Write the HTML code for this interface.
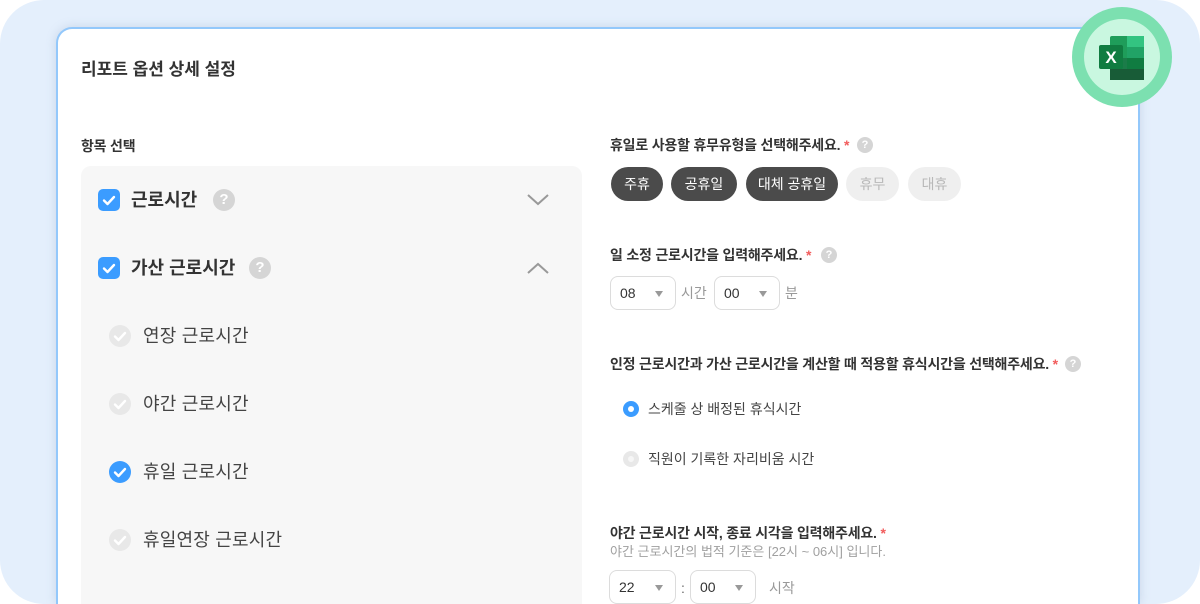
<!DOCTYPE html>
<html style="width:1200px;height:604px;overflow:hidden"><head><meta charset="utf-8"><style>
*{margin:0;padding:0;box-sizing:border-box}
body{width:1200px;height:604px;background:#fff;font-family:"Liberation Sans","Noto Sans CJK KR",sans-serif;overflow:hidden;position:relative;color:#333}
.bg{position:absolute;left:0;top:0;width:1200px;height:604px;background:#e4effc;border-radius:44px}
.card{position:absolute;left:56px;top:27px;width:1084px;height:577px;background:#fff;border:2px solid #93c8fb;border-bottom:none;border-radius:16px 16px 0 0;box-shadow:0 0 10px rgba(120,140,170,.25)}
.a{position:absolute;white-space:nowrap}
.lbl{font-size:14px;font-weight:bold;color:#333;line-height:20px;letter-spacing:-0.2px}
.req{color:#f25c5c}
.q{position:absolute;border-radius:50%;background:#d5d5d5;color:#fff;font-weight:bold;text-align:center}
.chip{position:absolute;top:167px;height:34px;border-radius:17px;font-size:14px;line-height:34px;text-align:center;background:#4b4b4b;color:#fff}
.chip.off{background:#efefef;color:#b8b8b8}
.sel{position:absolute;height:34px;border:1px solid #dcdcdc;border-radius:8px;background:#fff;font-size:14px;line-height:32px;padding-left:9px;color:#333}
.sel.b{height:34px;border-bottom-left-radius:8px}
.sel:after{content:"";position:absolute;right:12px;top:14px;border-left:4px solid transparent;border-right:4px solid transparent;border-top:6px solid #999}
.unit{position:absolute;font-size:14px;color:#999;line-height:20px}
.cb{position:absolute;width:22px;height:22px;border-radius:5px;background:#3b9cff}
.cc{position:absolute;width:22px;height:22px;border-radius:50%}
.sub{position:absolute;left:143px;font-size:18px;color:#444;line-height:24px;letter-spacing:0.2px}
</style></head><body>
<div class="bg"></div>
<div class="card"></div>

<div class="a" style="left:81px;top:59px;font-size:17px;font-weight:bold;color:#333;line-height:22px">리포트 옵션 상세 설정</div>
<div class="a lbl" style="left:81px;top:136px">항목 선택</div>

<div style="position:absolute;left:81px;top:166px;width:501px;height:438px;background:#f7f7f7;border-radius:10px 10px 0 0"></div>

<div class="cb" style="left:98px;top:189px"><svg width="22" height="22"><path d="M6 11.5l3.5 3.5 6.5-7" stroke="#fff" stroke-width="2.4" fill="none" stroke-linecap="round" stroke-linejoin="round"/></svg></div>
<div class="a" style="left:131px;top:188px;font-size:18px;font-weight:bold;color:#333;line-height:24px">근로시간</div>
<div class="q" style="left:213px;top:189px;width:22px;height:22px;font-size:15px;line-height:22px">?</div>
<svg class="a" style="left:526px;top:192px" width="24" height="16"><path d="M2 3l10 9 10-9" stroke="#999" stroke-width="2" fill="none"/></svg>

<div class="cb" style="left:98px;top:257px"><svg width="22" height="22"><path d="M6 11.5l3.5 3.5 6.5-7" stroke="#fff" stroke-width="2.4" fill="none" stroke-linecap="round" stroke-linejoin="round"/></svg></div>
<div class="a" style="left:131px;top:256px;font-size:18px;font-weight:bold;color:#333;line-height:24px">가산 근로시간</div>
<div class="q" style="left:249px;top:257px;width:22px;height:22px;font-size:15px;line-height:22px">?</div>
<svg class="a" style="left:526px;top:260px" width="24" height="16"><path d="M2 13l10-9 10 9" stroke="#999" stroke-width="2" fill="none"/></svg>

<div class="cc" style="left:109px;top:325px;background:#e8e8e8"><svg width="22" height="22"><path d="M6 11.5l3.5 3.5 6.5-7" stroke="#fff" stroke-width="2.4" fill="none" stroke-linecap="round" stroke-linejoin="round"/></svg></div>
<div class="sub" style="top:324px">연장 근로시간</div>
<div class="cc" style="left:109px;top:393px;background:#e8e8e8"><svg width="22" height="22"><path d="M6 11.5l3.5 3.5 6.5-7" stroke="#fff" stroke-width="2.4" fill="none" stroke-linecap="round" stroke-linejoin="round"/></svg></div>
<div class="sub" style="top:392px">야간 근로시간</div>
<div class="cc" style="left:109px;top:461px;background:#3b9cff"><svg width="22" height="22"><path d="M6 11.5l3.5 3.5 6.5-7" stroke="#fff" stroke-width="2.4" fill="none" stroke-linecap="round" stroke-linejoin="round"/></svg></div>
<div class="sub" style="top:460px">휴일 근로시간</div>
<div class="cc" style="left:109px;top:529px;background:#e8e8e8"><svg width="22" height="22"><path d="M6 11.5l3.5 3.5 6.5-7" stroke="#fff" stroke-width="2.4" fill="none" stroke-linecap="round" stroke-linejoin="round"/></svg></div>
<div class="sub" style="top:528px">휴일연장 근로시간</div>

<div class="a lbl" style="left:610px;top:135px">휴일로 사용할 휴무유형을 선택해주세요. <span class="req">*</span></div>
<div class="q" style="left:857px;top:137px;width:16px;height:16px;font-size:11px;line-height:16px">?</div>
<div class="chip" style="left:611px;width:52px">주휴</div>
<div class="chip" style="left:671px;width:66px">공휴일</div>
<div class="chip" style="left:746px;width:92px">대체 공휴일</div>
<div class="chip off" style="left:846px;width:53px">휴무</div>
<div class="chip off" style="left:908px;width:53px">대휴</div>

<div class="a lbl" style="left:610px;top:245px">일 소정 근로시간을 입력해주세요. <span class="req">*</span></div>
<div class="q" style="left:821px;top:247px;width:16px;height:16px;font-size:11px;line-height:16px">?</div>
<div class="sel" style="left:610px;top:276px;width:66px">08</div>
<div class="unit" style="left:681px;top:283px">시간</div>
<div class="sel" style="left:714px;top:276px;width:66px">00</div>
<div class="unit" style="left:785px;top:283px">분</div>

<div class="a lbl" style="left:610px;top:354px">인정 근로시간과 가산 근로시간을 계산할 때 적용할 휴식시간을 선택해주세요. <span class="req">*</span></div>
<div class="q" style="left:1065px;top:356px;width:16px;height:16px;font-size:11px;line-height:16px">?</div>

<div class="a" style="left:623px;top:401px;width:16px;height:16px;border-radius:50%;background:#3b9cff"><div style="position:absolute;left:5px;top:5px;width:6px;height:6px;border-radius:50%;background:#fff"></div></div>
<div class="a" style="left:648px;top:399px;font-size:14px;color:#444;line-height:20px">스케줄 상 배정된 휴식시간</div>
<div class="a" style="left:623px;top:451px;width:16px;height:16px;border-radius:50%;background:#e8e8e8"><div style="position:absolute;left:5px;top:5px;width:6px;height:6px;border-radius:50%;background:#f6f6f6"></div></div>
<div class="a" style="left:648px;top:449px;font-size:14px;color:#444;line-height:20px">직원이 기록한 자리비움 시간</div>

<div class="a lbl" style="left:610px;top:523px">야간 근로시간 시작, 종료 시각을 입력해주세요. <span class="req">*</span></div>
<div class="a" style="left:610px;top:543px;font-size:13px;color:#a0a0a0;line-height:18px">야간 근로시간의 법적 기준은 [22시 ~ 06시] 입니다.</div>
<div class="sel" style="left:609px;top:570px;width:67px">22</div>
<div class="unit" style="left:681px;top:578px;color:#666">:</div>
<div class="sel" style="left:690px;top:570px;width:66px">00</div>
<div class="unit" style="left:769px;top:578px">시작</div>

<div class="a" style="left:1072px;top:7px;width:100px;height:100px;border-radius:50%;background:#7ce0b0"></div>
<div class="a" style="left:1084px;top:19px;width:76px;height:76px;border-radius:50%;background:#c9f7e0"></div>
<svg class="a" style="left:1099px;top:34px" width="46" height="48" viewBox="0 0 46 48">
<rect x="11" y="2" width="34" height="44" rx="2" fill="#1f9d5a"/>
<rect x="28" y="2" width="17" height="11" fill="#33c481"/>
<rect x="28" y="13" width="17" height="11" fill="#21a366"/>
<rect x="28" y="24" width="17" height="11" fill="#107c41"/>
<rect x="11" y="24" width="17" height="11" fill="#185c37" opacity=".5"/>
<rect x="11" y="35" width="34" height="11" fill="#185c37"/>
<rect x="0" y="11" width="24" height="24" rx="2" fill="#107c41"/>
<text x="12" y="29" font-family="Liberation Sans" font-weight="bold" font-size="17" fill="#fff" text-anchor="middle">X</text>
</svg>
</body></html>
